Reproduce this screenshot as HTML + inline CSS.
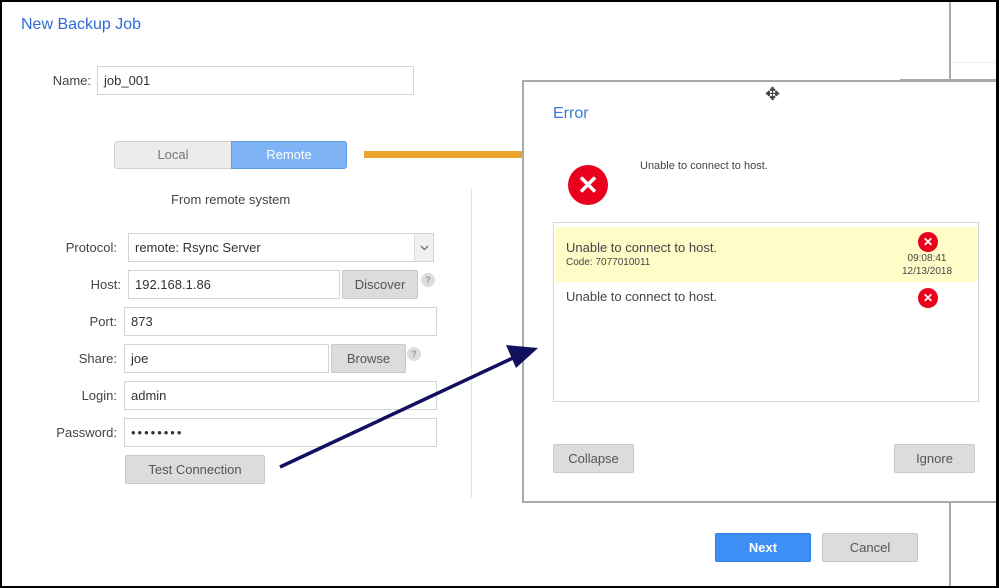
<!DOCTYPE html>
<html><head><style>
*{box-sizing:border-box;margin:0;padding:0}
body{width:999px;height:588px;overflow:hidden;background:#fff;font-family:"Liberation Sans",sans-serif;position:relative;color:#444}
.a{position:absolute}
.inp{position:absolute;border:1px solid #d4d4d4;background:#fff;font-size:13px;padding-left:6px;color:#333;display:flex;align-items:center}
.lbl{position:absolute;font-size:13px;color:#444;text-align:right;width:100px;padding-right:6px}
.btn{position:absolute;background:#dcdcdc;border:1px solid #c8c8c8;border-radius:2px;font-size:13px;color:#555;display:flex;align-items:center;justify-content:center}
.q{position:absolute;width:14px;height:14px;border-radius:50%;background:#ddd;color:#999;font-size:9px;text-align:center;line-height:14px;font-weight:bold}
.x{position:absolute;border-radius:50%;background:#e8001c;color:#fff;text-align:center;font-weight:bold}
</style></head><body>
<div class="a" style="left:0;top:0;width:999px;height:588px;border:2px solid #000;border-right-width:3px;z-index:10;pointer-events:none"></div>
<div class="a" style="left:949px;top:0;width:2px;height:588px;background:#aaa"></div>
<div class="a" style="left:900px;top:79px;width:99px;height:2px;background:#aaa"></div>
<div class="a" style="left:951px;top:62px;width:48px;height:1px;background:#eee"></div>

<div class="a" style="left:21px;top:16px;font-size:16px;color:#2f6ad8">New Backup Job</div>
<div class="lbl" style="left:-3px;top:73px">Name:</div>
<div class="inp" style="left:97px;top:66px;width:317px;height:29px">job_001</div>

<div class="a" style="left:114px;top:141px;width:118px;height:28px;background:#ececec;border:1px solid #d0d0d0;border-radius:3px 0 0 3px;font-size:13px;color:#777;text-align:center;line-height:26px">Local</div>
<div class="a" style="left:231px;top:141px;width:116px;height:28px;background:#7eb4f5;border:1px solid #5f9ae6;border-radius:0 3px 3px 0;font-size:13px;color:#fff;text-align:center;line-height:26px">Remote</div>
<div class="a" style="left:364px;top:151px;width:160px;height:7px;background:#eba52c"></div>

<div class="a" style="left:171px;top:192px;font-size:13px;color:#444">From remote system</div>
<div class="a" style="left:471px;top:188px;width:1px;height:310px;background:#e4e4e4"></div>

<div class="lbl" style="left:23px;top:240px">Protocol:</div>
<div class="inp" style="left:128px;top:233px;width:306px;height:29px">remote: Rsync Server</div>
<div class="a" style="left:414px;top:234px;width:19px;height:27px;background:#f0f0f0;border-left:1px solid #ddd"><svg width="19" height="27"><path d="M6 12 L9.5 15.5 L13 12" stroke="#777" stroke-width="1.5" fill="none"/></svg></div>
<div class="lbl" style="left:27px;top:277px">Host:</div>
<div class="inp" style="left:128px;top:270px;width:212px;height:29px">192.168.1.86</div>
<div class="btn" style="left:342px;top:270px;width:76px;height:29px">Discover</div>
<div class="q" style="left:421px;top:273px">?</div>
<div class="lbl" style="left:23px;top:314px">Port:</div>
<div class="inp" style="left:124px;top:307px;width:313px;height:29px">873</div>
<div class="lbl" style="left:23px;top:351px">Share:</div>
<div class="inp" style="left:124px;top:344px;width:205px;height:29px">joe</div>
<div class="btn" style="left:331px;top:344px;width:75px;height:29px">Browse</div>
<div class="q" style="left:407px;top:347px">?</div>
<div class="lbl" style="left:23px;top:388px">Login:</div>
<div class="inp" style="left:124px;top:381px;width:313px;height:29px">admin</div>
<div class="lbl" style="left:23px;top:425px">Password:</div>
<div class="inp" style="left:124px;top:418px;width:313px;height:29px;letter-spacing:2px">••••••••</div>
<div class="btn" style="left:125px;top:455px;width:140px;height:29px">Test Connection</div>

<div class="btn" style="left:715px;top:533px;width:96px;height:29px;background:#3d8ef5;border-color:#2f7ee6;color:#fff;font-weight:bold">Next</div>
<div class="btn" style="left:822px;top:533px;width:96px;height:29px">Cancel</div>

<div class="a" style="left:522px;top:80px;width:480px;height:423px;background:#fff;border:2px solid #aaa;border-right:none">
 <div class="a" style="left:241px;top:2px;font-size:18px;color:#444">✥</div>
 <div class="a" style="left:29px;top:23px;font-size:16px;color:#3a78dc">Error</div>
 <div class="x" style="left:44px;top:83px;width:40px;height:40px;font-size:26px;line-height:40px">✕</div>
 <div class="a" style="left:116px;top:78px;font-size:11px;color:#444">Unable to connect to host.</div>
 <div class="a" style="left:29px;top:140px;width:426px;height:180px;border:1px solid #d4d4d4">
  <div class="a" style="left:2px;top:4px;width:421px;height:55px;background:#fffcc8"></div>
  <div class="a" style="left:12px;top:17px;font-size:13px;color:#444">Unable to connect to host.</div>
  <div class="a" style="left:12px;top:34px;font-size:10px;color:#444">Code: 7077010011</div>
  <div class="x" style="left:364px;top:9px;width:20px;height:20px;font-size:12px;line-height:20px">✕</div>
  <div class="a" style="left:340px;top:29px;width:66px;text-align:center;font-size:10px;color:#444;line-height:13px">09:08:41<br>12/13/2018</div>
  <div class="a" style="left:12px;top:66px;font-size:13px;color:#444">Unable to connect to host.</div>
  <div class="x" style="left:364px;top:65px;width:20px;height:20px;font-size:12px;line-height:20px">✕</div>
 </div>
 <div class="btn" style="left:29px;top:362px;width:81px;height:29px">Collapse</div>
 <div class="btn" style="left:370px;top:362px;width:81px;height:29px">Ignore</div>
</div>

<svg class="a" style="left:0;top:0;z-index:5" width="999" height="588"><line x1="280" y1="467" x2="515" y2="357" stroke="#10105e" stroke-width="3.5"/><polygon points="538,348 506,345 516,368" fill="#10105e"/></svg>
</body></html>
